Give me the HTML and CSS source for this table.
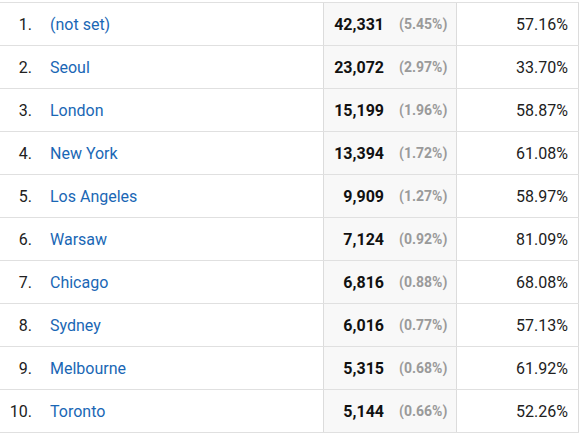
FILE: index.html
```html
<!DOCTYPE html>
<html>
<head>
<meta charset="utf-8">
<link rel="stylesheet" href="styles.css">
</head>
<body>
<div class="table">
  <div class="row"><div class="dim"><span class="rank">1.</span><a class="name">(not set)</a></div><div class="metric"><span class="val">42,331</span><span class="pct">(5.45%)</span></div><div class="rate">57.16%</div></div>
  <div class="row"><div class="dim"><span class="rank">2.</span><a class="name">Seoul</a></div><div class="metric"><span class="val">23,072</span><span class="pct">(2.97%)</span></div><div class="rate">33.70%</div></div>
  <div class="row"><div class="dim"><span class="rank">3.</span><a class="name">London</a></div><div class="metric"><span class="val">15,199</span><span class="pct">(1.96%)</span></div><div class="rate">58.87%</div></div>
  <div class="row"><div class="dim"><span class="rank">4.</span><a class="name">New York</a></div><div class="metric"><span class="val">13,394</span><span class="pct">(1.72%)</span></div><div class="rate">61.08%</div></div>
  <div class="row"><div class="dim"><span class="rank">5.</span><a class="name">Los Angeles</a></div><div class="metric"><span class="val">9,909</span><span class="pct">(1.27%)</span></div><div class="rate">58.97%</div></div>
  <div class="row"><div class="dim"><span class="rank">6.</span><a class="name">Warsaw</a></div><div class="metric"><span class="val">7,124</span><span class="pct">(0.92%)</span></div><div class="rate">81.09%</div></div>
  <div class="row"><div class="dim"><span class="rank">7.</span><a class="name">Chicago</a></div><div class="metric"><span class="val">6,816</span><span class="pct">(0.88%)</span></div><div class="rate">68.08%</div></div>
  <div class="row"><div class="dim"><span class="rank">8.</span><a class="name">Sydney</a></div><div class="metric"><span class="val">6,016</span><span class="pct">(0.77%)</span></div><div class="rate">57.13%</div></div>
  <div class="row"><div class="dim"><span class="rank">9.</span><a class="name">Melbourne</a></div><div class="metric"><span class="val">5,315</span><span class="pct">(0.68%)</span></div><div class="rate">61.92%</div></div>
  <div class="row"><div class="dim"><span class="rank">10.</span><a class="name">Toronto</a></div><div class="metric"><span class="val">5,144</span><span class="pct">(0.66%)</span></div><div class="rate">52.26%</div></div>
</div>
</body>
</html>
```
FILE: styles.css
```css
html, body {
  margin: 0;
  padding: 0;
  background: #fff;
}
body {
  font-family: Roboto, "Liberation Sans", sans-serif;
  font-size: 16px;
  color: #212121;
}
.table {
  margin-top: 2px;
  width: 579px;
  border-top: 1px solid #e0e0e0;
}
.row {
  display: flex;
  height: 42px;
  border-bottom: 1px solid #e0e0e0;
}
.dim {
  width: 323px;
  display: flex;
  align-items: center;
}
.rank {
  width: 32px;
  text-align: right;
  color: #212121;
}
.name {
  margin-left: 18px;
  color: #1a67b5;
}
.metric {
  border-left: 1px solid #dcdcdc;
  border-right: 1px solid #dcdcdc;
  background: #f8f8f8;
  display: flex;
  align-items: center;
  justify-content: flex-end;
  padding-right: 9px;
  width: 123px;
}
.val {
  font-weight: bold;
  color: #111;
}
.pct {
  margin-left: 15px;
  font-size: 14px;
  font-weight: bold;
  color: #9a9a9a;
  width: 48px;
  text-align: right;
}
.rate {
  width: 111px;
  padding-right: 10px;
  border-right: 1px solid #dcdcdc;
  display: flex;
  align-items: center;
  justify-content: flex-end;
}
```
